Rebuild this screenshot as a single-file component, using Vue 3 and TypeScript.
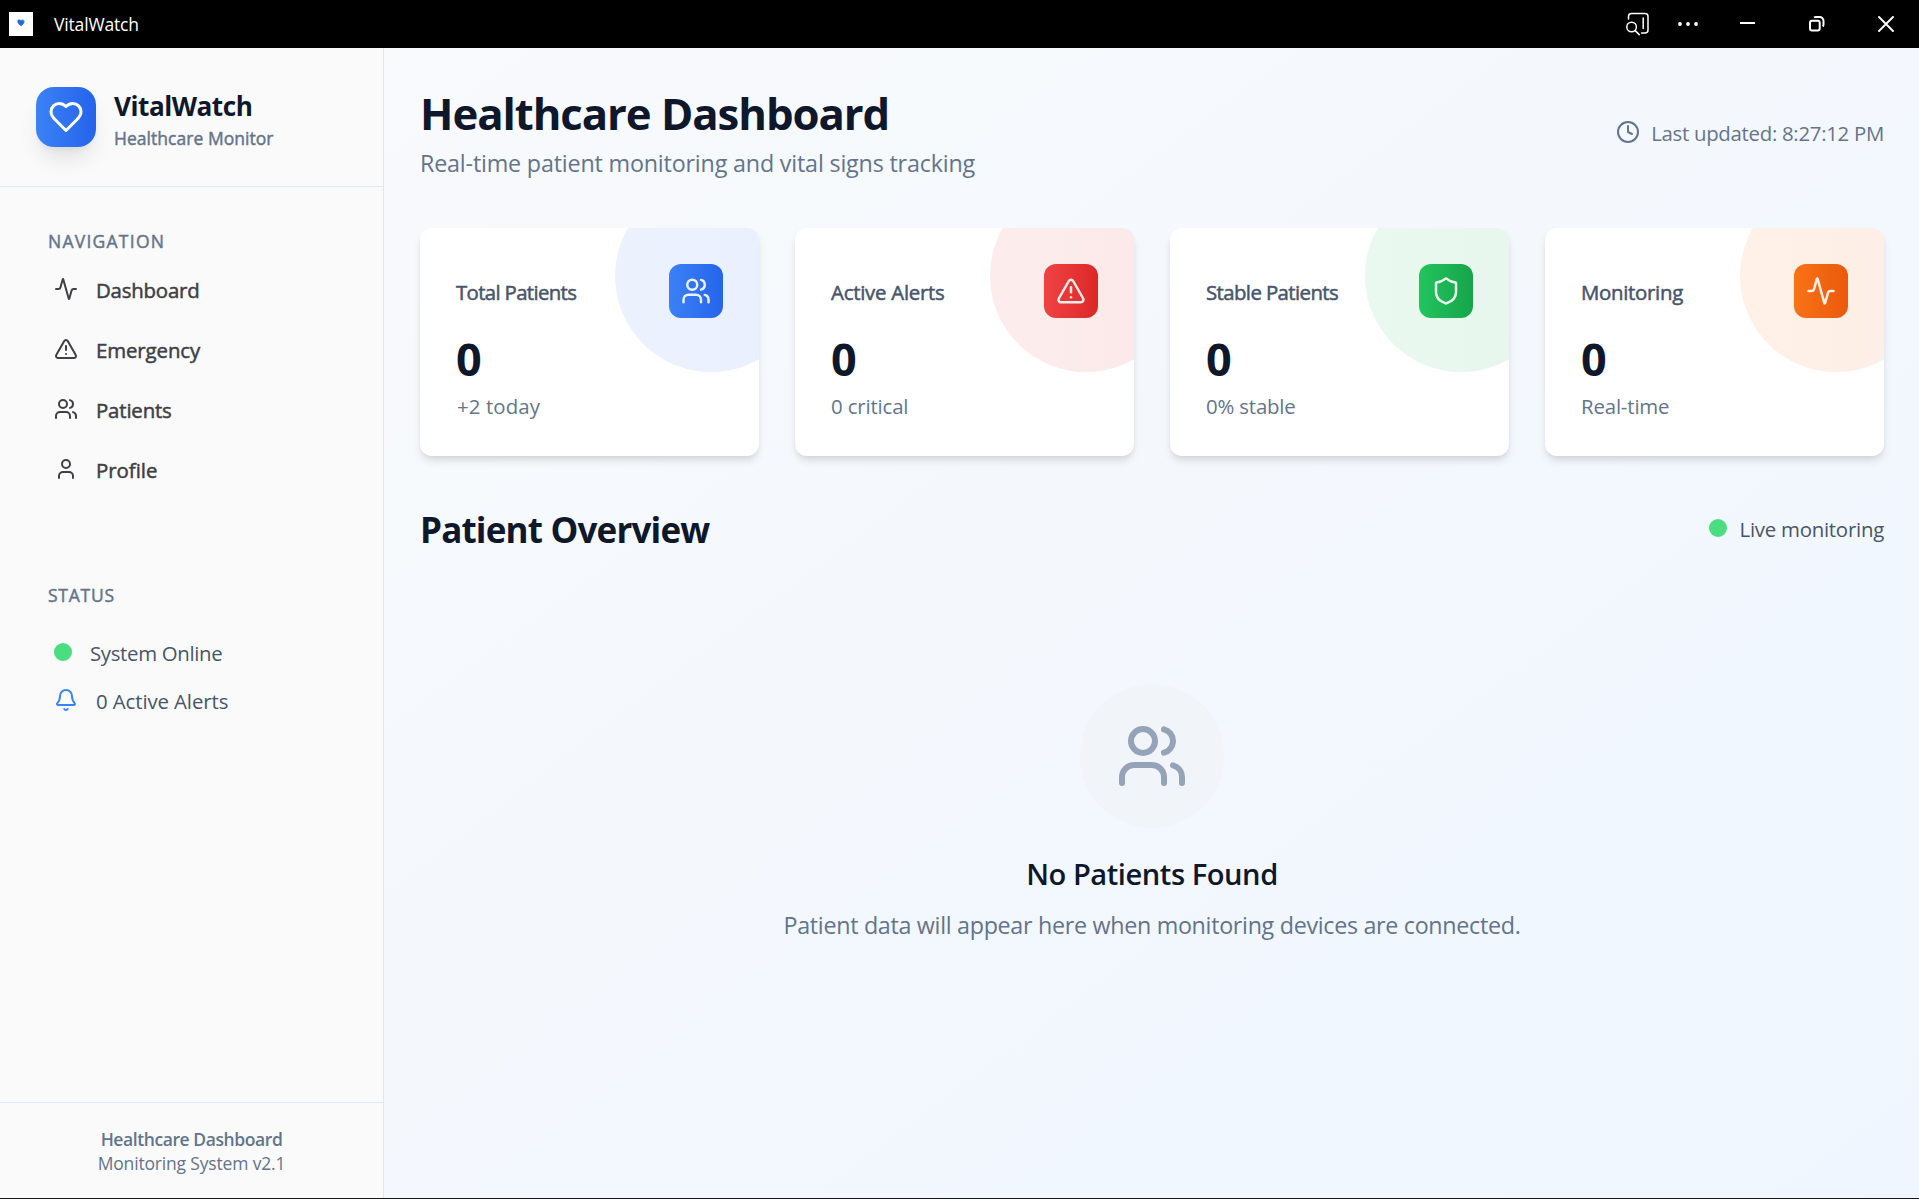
<script setup lang="ts">
import { defineComponent, h } from 'vue'

type IconName = 'heart' | 'activity' | 'alert' | 'users' | 'user' | 'bell' | 'clock' | 'shield'

const shapes: Record<IconName, string[]> = {
  heart: ['M19 14c1.49-1.46 3-3.21 3-5.5A5.5 5.5 0 0 0 16.5 3c-1.76 0-3 .5-4.5 2-1.5-1.5-2.74-2-4.5-2A5.5 5.5 0 0 0 2 8.5c0 2.3 1.5 4.05 3 5.5l7 7Z'],
  activity: ['M22 12h-2.48a2 2 0 0 0-1.93 1.46l-2.35 8.36a.25.25 0 0 1-.48 0L9.24 2.18a.25.25 0 0 0-.48 0l-2.35 8.36A2 2 0 0 1 4.49 12H2'],
  alert: ['m21.73 18-8-14a2 2 0 0 0-3.48 0l-8 14A2 2 0 0 0 4 21h16a2 2 0 0 0 1.73-3', 'M12 9v4', 'M12 17h.01'],
  users: ['M16 21v-2a4 4 0 0 0-4-4H6a4 4 0 0 0-4 4v2', 'M5 7a4 4 0 1 0 8 0a4 4 0 1 0-8 0', 'M22 21v-2a4 4 0 0 0-3-3.87', 'M16 3.13a4 4 0 0 1 0 7.75'],
  user: ['M19 21v-2a4 4 0 0 0-4-4H9a4 4 0 0 0-4 4v2', 'M8 7a4 4 0 1 0 8 0a4 4 0 1 0-8 0'],
  bell: ['M10.268 21a2 2 0 0 0 3.464 0', 'M3.262 15.326A1 1 0 0 0 4 17h16a1 1 0 0 0 .74-1.673C19.41 13.956 18 12.499 18 8A6 6 0 0 0 6 8c0 4.499-1.411 5.956-2.738 7.326'],
  clock: ['M2 12a10 10 0 1 0 20 0a10 10 0 1 0-20 0', 'M12 6v6l4 2'],
  shield: ['M20 13c0 5-3.5 7.5-7.66 8.95a1 1 0 0 1-.67-.01C7.5 20.5 4 18 4 13V6a1 1 0 0 1 1-1c2 0 4.5-1.2 6.24-2.72a1.17 1.17 0 0 1 1.52 0C14.51 3.81 17 5 19 5a1 1 0 0 1 1 1z'],
}

const AppIcon = defineComponent({
  props: { name: { type: String, required: true }, size: { type: Number, default: 24 } },
  setup(props) {
    return () =>
      h(
        'svg',
        {
          width: props.size,
          height: props.size,
          viewBox: '0 0 24 24',
          fill: 'none',
          stroke: 'currentColor',
          'stroke-width': 2,
          'stroke-linecap': 'round',
          'stroke-linejoin': 'round',
        },
        shapes[props.name as IconName].map((d) => h('path', { d })),
      )
  },
})

interface NavItem { label: string; icon: IconName; track: number }
interface Stat { title: string; value: number; note: string; icon: IconName; tone: string; titleTrack: number; noteTrack: number }

const navItems: NavItem[] = [
  { label: 'Dashboard', icon: 'activity', track: -0.2 },
  { label: 'Emergency', icon: 'alert', track: -0.1 },
  { label: 'Patients', icon: 'users', track: -0.16 },
  { label: 'Profile', icon: 'user', track: -0.02 },
]

const stats: Stat[] = [
  { title: 'Total Patients', value: 0, note: '+2 today', icon: 'users', tone: 'blue', titleTrack: -0.66, noteTrack: 0.12 },
  { title: 'Active Alerts', value: 0, note: '0 critical', icon: 'alert', tone: 'red', titleTrack: -0.25, noteTrack: -0.15 },
  { title: 'Stable Patients', value: 0, note: '0% stable', icon: 'shield', tone: 'green', titleTrack: -0.6, noteTrack: -0.18 },
  { title: 'Monitoring', value: 0, note: 'Real-time', icon: 'activity', tone: 'orange', titleTrack: -0.29, noteTrack: -0.16 },
]
</script>

<template>
  <div class="window">
    <header class="titlebar">
      <span class="app-icon">
        <svg width="24" height="24" viewBox="0 0 24 24">
          <defs>
            <linearGradient id="heartFill" x1="0" y1="1" x2="1" y2="0">
              <stop offset="0" stop-color="#2f6bea" />
              <stop offset="0.6" stop-color="#1e63e0" />
              <stop offset="1" stop-color="#1fc0d8" />
            </linearGradient>
          </defs>
          <path d="M12 14.2C9.800 12.400 8.400 11.200 8.400 9.500c0-2.200 2.600-2.700 3.600-1.100 1-1.600 3.600-1.100 3.600 1.100 0 1.700-1.400 2.900-3.600 4.700z" fill="url(#heartFill)" />
          <rect x="6" y="16" width="12" height="1" fill="#f3f8f6" />
        </svg>
      </span>
      <span class="app-name">VitalWatch</span>
      <div class="win-controls">
        <svg class="ctl-search" width="26" height="26" viewBox="0 0 26 26" fill="none" stroke="#fff" stroke-width="1.5" stroke-linecap="round">
          <path d="M3.500 8V5.500a3 3 0 0 1 3-3H20a3 3 0 0 1 3 3V19a3 3 0 0 1-3 3h-3.500" />
          <path d="M18.200 7v10.500" />
          <circle cx="6.600" cy="16" r="4.800" />
          <path d="M10.200 19.600l4 4" />
        </svg>
        <svg class="ctl-more" width="20" height="6" viewBox="0 0 20 6" fill="#fff">
          <circle cx="2" cy="3" r="1.900" /><circle cx="10" cy="3" r="1.900" /><circle cx="18" cy="3" r="1.900" />
        </svg>
        <svg class="ctl-min" width="15" height="18" viewBox="0 0 15 18"><rect y="7" width="15" height="2" fill="#fff" /></svg>
        <svg class="ctl-restore" width="16" height="16" viewBox="0 0 16 16" fill="none" stroke="#fff" stroke-width="2">
          <rect x="1" y="4.800" width="9.700" height="9.700" rx="2" />
          <path d="M5 1.500Q5.800 1 7 1h3.500a4 4 0 0 1 4 4v3.500q0 1.400-.7 2" />
        </svg>
        <svg class="ctl-close" width="16" height="16" viewBox="0 0 16 16" stroke="#fff" stroke-width="1.900" stroke-linecap="round">
          <path d="M1 1l14 14M15 1L1 15" />
        </svg>
      </div>
    </header>

    <div class="body">
      <aside class="sidebar">
        <div class="brand">
          <div class="brand-logo"><AppIcon name="heart" :size="36" /></div>
          <div>
            <div class="brand-name">VitalWatch</div>
            <div class="brand-sub">Healthcare Monitor</div>
          </div>
        </div>

        <nav class="group">
          <div class="group-label">NAVIGATION</div>
          <a v-for="item in navItems" :key="item.label" class="nav-item">
            <AppIcon :name="item.icon" />
            <span :style="{ letterSpacing: item.track + 'px' }">{{ item.label }}</span>
          </a>
        </nav>

        <section class="group status">
          <div class="group-label">STATUS</div>
          <div class="status-row online"><i class="dot" /><span>System Online</span></div>
          <div class="status-row alerts"><AppIcon name="bell" /><span>0 Active Alerts</span></div>
        </section>

        <footer class="side-footer">
          <div class="foot-title">Healthcare Dashboard</div>
          <div class="foot-version">Monitoring System v2.1</div>
        </footer>
      </aside>

      <main class="content">
        <div class="page-head">
          <div>
            <h1>Healthcare Dashboard</h1>
            <p>Real-time patient monitoring and vital signs tracking</p>
          </div>
          <div class="updated"><AppIcon name="clock" /><span>Last updated: 8:27:12 PM</span></div>
        </div>

        <div class="stats">
          <article v-for="s in stats" :key="s.title" class="card" :class="s.tone">
            <div class="card-head">
              <span class="card-title" :style="{ letterSpacing: s.titleTrack + 'px' }">{{ s.title }}</span>
              <span class="tile"><AppIcon :name="s.icon" :size="30" /></span>
            </div>
            <div class="value">{{ s.value }}</div>
            <div class="note" :style="{ letterSpacing: s.noteTrack + 'px' }">{{ s.note }}</div>
            <i class="halo" />
          </article>
        </div>

        <div class="section-head">
          <h2>Patient Overview</h2>
          <div class="live"><i class="dot" /><span>Live monitoring</span></div>
        </div>

        <div class="empty">
          <div class="empty-icon"><AppIcon name="users" :size="72" /></div>
          <h3>No Patients Found</h3>
          <p>Patient data will appear here when monitoring devices are connected.</p>
        </div>
      </main>
    </div>
  </div>
</template>

<style>
body { background: #000; }
</style>

<style scoped>
.window {
  display: flex;
  flex-direction: column;
  height: 1199px;
  border-bottom: 1px solid #16181c;
  box-sizing: border-box;
  overflow: hidden;
  font-family: "Open Sans", "Noto Sans", sans-serif;
  color: #0f172a;
}
h1, h2, h3, p { margin: 0; }
svg { display: block; flex: none; }

.titlebar {
  display: flex;
  align-items: center;
  flex: none;
  height: 48px;
  padding-left: 9px;
  background: #000;
  color: #fff;
}
.app-icon { width: 24px; height: 24px; background: #fff; }
.app-name { margin-left: 21px; font-size: 17.5px; letter-spacing: -0.16px; }
.win-controls { display: flex; align-items: center; margin-left: auto; padding-right: 25px; }
.ctl-more { margin-left: 27px; }
.ctl-min { margin-left: 42px; }
.ctl-restore { margin-left: 54px; }
.ctl-close { margin-left: 53px; }

.body { display: flex; flex: 1; min-height: 0; }

.sidebar {
  display: flex;
  flex-direction: column;
  flex: none;
  box-sizing: border-box;
  width: 384px;
  background: #fafafa;
  border-right: 1px solid #dbe7fc;
}
.brand {
  display: flex;
  align-items: center;
  gap: 18px;
  height: 138px;
  padding: 0 36px;
  border-bottom: 1px solid #dbeafe;
}
.brand-logo {
  display: grid;
  place-items: center;
  width: 60px;
  height: 60px;
  border-radius: 18px;
  color: #fff;
  background: linear-gradient(to right, #3b82f6, #2563eb);
  box-shadow: 0 15px 22.5px -4.5px rgba(0, 0, 0, 0.1), 0 6px 9px -6px rgba(0, 0, 0, 0.1);
}
.brand-name { padding-top: 1px; font-size: 26.2px; line-height: 42px; font-weight: 700; letter-spacing: -0.5px; }
.brand-sub { margin-top: -1px; font-size: 17.5px; line-height: 24px; letter-spacing: 0.04px; color: #64748b; -webkit-text-stroke: 0.45px; }

.group { display: flex; flex-direction: column; padding: 30px 36px 0; }
.group-label {
  height: 48px;
  padding-left: 12px;
  font-size: 17.5px;
  line-height: 48px;
  letter-spacing: 1.25px;
  color: #64748b;
  -webkit-text-stroke: 0.45px;
}
.nav-item {
  display: flex;
  align-items: center;
  gap: 18px;
  height: 48px;
  margin-bottom: 12px;
  padding-left: 18px;
  font-size: 20.4px;
  color: #3f3f46;
  -webkit-text-stroke: 0.5px;
}
.nav-item span, .status-row span, .updated span, .live span { padding-top: 2px; }

.status { padding-top: 66px; }
.status .group-label { letter-spacing: 0.75px; }
.status-row {
  display: flex;
  align-items: center;
  gap: 18px;
  height: 30px;
  margin-top: 18px;
  padding-left: 18px;
  font-size: 20.4px;
  color: #475569;
}
.online { letter-spacing: -0.33px; }
.alerts { letter-spacing: -0.1px; }
.alerts svg { color: #3b82f6; }
.dot { flex: none; width: 18px; height: 18px; border-radius: 50%; background: #4ade80; }
.online .dot { box-shadow: 0 1px 2px rgba(0, 0, 0, 0.06); }

.side-footer {
  margin-top: auto;
  height: 96px;
  box-sizing: border-box;
  padding-top: 24px;
  border-top: 1px solid #dbeafe;
  text-align: center;
  font-size: 17.5px;
  line-height: 24px;
  color: #64748b;
}
.foot-title { font-weight: 600; letter-spacing: -0.42px; }
.foot-version { letter-spacing: -0.17px; }

.content {
  flex: 1;
  min-width: 0;
  padding: 36px 35px 0 36px;
  background: linear-gradient(to bottom right, #f8fafc, #eff6ff);
}
.page-head { display: flex; align-items: center; justify-content: space-between; height: 96px; }
h1 { padding-top: 2px; font-size: 43.7px; line-height: 54px; font-weight: 700; letter-spacing: -1.05px; }
.page-head p { margin: 5px 0 -1px; font-size: 23.3px; line-height: 36px; letter-spacing: -0.18px; color: #64748b; }
.updated { display: flex; align-items: center; gap: 11px; font-size: 20.4px; letter-spacing: -0.29px; color: #64748b; }

.stats { display: grid; grid-template-columns: repeat(4, 1fr); gap: 36px; margin-top: 48px; }
.card {
  position: relative;
  height: 228px;
  box-sizing: border-box;
  padding: 36px;
  border-radius: 12px;
  background: #fff;
  box-shadow: 0 6px 9px -1.5px rgba(0, 0, 0, 0.1), 0 3px 6px -3px rgba(0, 0, 0, 0.1);
  overflow: hidden;
}
.card-head { display: flex; align-items: center; justify-content: space-between; height: 54px; }
.card-title { padding-top: 2px; font-size: 20.4px; line-height: 30px; color: #475569; -webkit-text-stroke: 0.5px; }
.tile { display: grid; place-items: center; width: 54px; height: 54px; border-radius: 12px; color: #fff; }
.value { margin-top: 12px; padding-top: 2px; font-size: 45px; line-height: 54px; font-weight: 700; }
.note { margin-top: 5px; font-size: 20.4px; line-height: 30px; color: #64748b; }
.blue .note { padding-left: 1px; }
.halo {
  position: absolute;
  top: -48px;
  right: -48px;
  width: 192px;
  height: 192px;
  border-radius: 50%;
  opacity: 0.1;
}
.blue .tile, .blue .halo { background: linear-gradient(to right, #3b82f6, #2563eb); }
.red .tile, .red .halo { background: linear-gradient(to right, #ef4444, #dc2626); }
.green .tile, .green .halo { background: linear-gradient(to right, #22c55e, #16a34a); }
.orange .tile, .orange .halo { background: linear-gradient(to right, #f97316, #ea580c); }

.section-head { display: flex; align-items: center; justify-content: space-between; margin-top: 48px; height: 48px; }
h2 { padding-top: 4px; font-size: 35px; line-height: 48px; font-weight: 700; letter-spacing: -0.82px; }
.live { display: flex; align-items: center; gap: 12px; font-size: 20.4px; letter-spacing: -0.24px; color: #475569; }

.empty { display: flex; flex-direction: column; align-items: center; margin-top: 132px; }
.empty-icon {
  display: grid;
  place-items: center;
  width: 144px;
  height: 144px;
  border-radius: 50%;
  background: #f1f5f9;
  color: #94a3b8;
}
h3 { margin-top: 25px; font-size: 29.1px; line-height: 42px; font-weight: 600; letter-spacing: -0.45px; }
.empty p { margin-top: 12px; font-size: 23.3px; line-height: 36px; letter-spacing: -0.31px; color: #64748b; }
</style>
